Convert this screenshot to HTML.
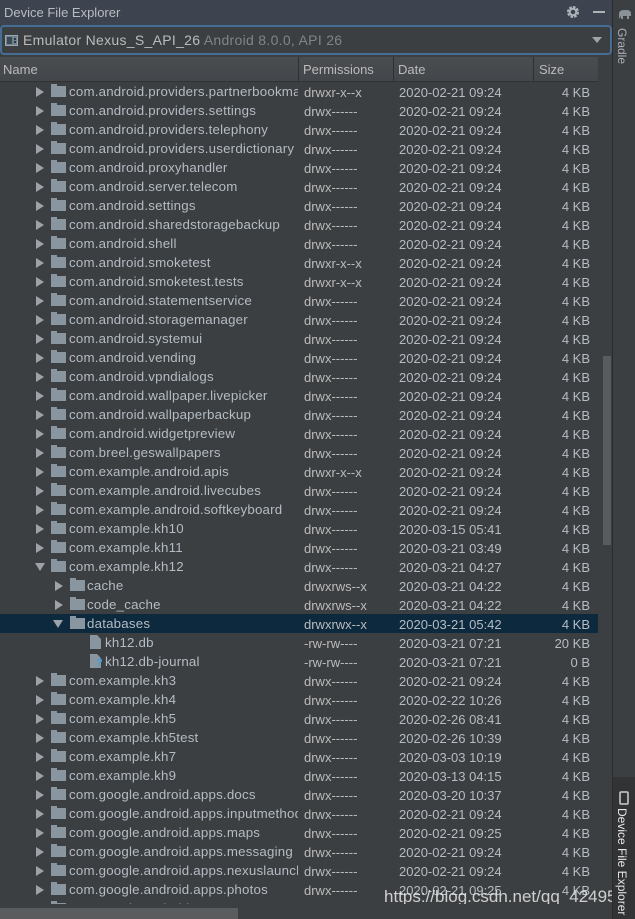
<!DOCTYPE html>
<html><head><meta charset="utf-8"><style>
*{margin:0;padding:0;box-sizing:border-box}
body{width:635px;height:919px;background:#3c3f41;font-family:"Liberation Sans",Arial,sans-serif;color:#bbbbbb;overflow:hidden;position:relative}
#title{position:absolute;left:0;top:0;width:613px;height:25px;background:#3d4450;font-size:13px;color:#b9bcc0}
#title span{position:absolute;left:4px;top:5px}
#combo{position:absolute;left:0;top:25px;width:612px;height:30px;background:#3c3f41;border:2px solid #466d94;border-radius:4px}
#combo .t{position:absolute;left:21px;top:5px;font-size:14px;color:#bbbbbb;letter-spacing:.3px}
#combo .t i{font-style:normal;color:#808488}
#hdr{position:absolute;left:0;top:57px;width:598px;height:25px;background:linear-gradient(#4a4d50,#43464a);border-bottom:1px solid #323232;font-size:13px;color:#bbbbbb}
#hdr div{position:absolute;top:5px}
.sep{position:absolute;top:0;width:1px;height:24px;background:#2e3032}
#list{position:absolute;left:0;top:82px;width:612px;height:822px;overflow:hidden}
.r{position:relative;height:19px;width:598px;font-size:13px;white-space:nowrap}
.r.sel{background:#0d293e}
.a{position:absolute;top:5px;width:0;height:0;border-left:8px solid #9da3a8;border-top:5px solid transparent;border-bottom:5px solid transparent}
.a.d{border-top:8px solid #9da3a8;border-left:5px solid transparent;border-right:5px solid transparent;border-bottom:0;top:6px}
.f{position:absolute;top:4px;width:15px;height:11px;background:#8a969f}
.f:before{content:"";position:absolute;left:0;top:-2px;width:6px;height:2px;background:#8a969f}
.fi{position:absolute;top:2px;width:11px;height:14px;background:#8a969f;clip-path:polygon(0 0,65% 0,100% 30%,100% 100%,0 100%)}
.n{position:absolute;top:2px;font-size:13.3px;letter-spacing:0.2px;color:#b4bcc4;width:229px;overflow:hidden}
.p{position:absolute;left:304px;top:3px}
.dt{position:absolute;left:399px;top:3px;color:#b5bcc3}
.s{position:absolute;right:8px;top:3px;color:#b5bcc3}
#vs{position:absolute;left:603px;top:356px;width:8px;height:189px;background:#595b5d}
#side{position:absolute;left:612px;top:0;width:23px;height:919px;background:#3c3f41;border-left:1px solid #2b2b2b}
#side .g{position:absolute;left:2px;top:28px;writing-mode:vertical-rl;font-size:12px;color:#a8adb2}
#side .de{position:absolute;left:0;top:777px;width:23px;height:142px;background:#313335}
#side .de span{position:absolute;left:2px;top:31px;writing-mode:vertical-rl;font-size:12px;color:#e6e6e6}
#hs{position:absolute;left:0;top:904px;width:612px;height:15px;background:#3c3f41}
#hs div{position:absolute;left:0;top:4px;width:238px;height:11px;background:#5a5c5e}
#wm{position:absolute;left:384px;top:887px;font-size:17px;color:#e8e8e8;white-space:nowrap;opacity:.85}
</style></head><body>
<div id="title"><span>Device File Explorer</span>
<svg style="position:absolute;left:566px;top:5px" width="14" height="14" viewBox="0 0 14 14"><circle cx="7" cy="7" r="4.5" fill="none" stroke="#aeb3b8" stroke-width="3" stroke-dasharray="2.4 1.1"/><circle cx="7" cy="7" r="3.3" fill="none" stroke="#aeb3b8" stroke-width="2"/></svg>
<div style="position:absolute;left:593px;top:11px;width:12px;height:2px;background:#aeb3b8"></div>
</div>
<div id="combo">
<svg style="position:absolute;left:3px;top:8px" width="13" height="11"><rect x="0.5" y="0.5" width="12" height="10" fill="#6f8390" stroke="#9aa7b0"/><rect x="2" y="2" width="5" height="7" fill="#3c4a55"/><rect x="9" y="3" width="2" height="2" fill="#2f3a43"/><rect x="9" y="6" width="2" height="2" fill="#2f3a43"/></svg>
<div class="t">Emulator Nexus_S_API_26 <i>Android 8.0.0, API 26</i></div>
<div style="position:absolute;left:590px;top:10px;width:0;height:0;border-top:6px solid #a0a4a8;border-left:5px solid transparent;border-right:5px solid transparent"></div>
</div>
<div id="hdr"><div style="left:3px">Name</div><span class="sep" style="left:298px"></span><div style="left:303px">Permissions</div><span class="sep" style="left:393px"></span><div style="left:398px">Date</div><span class="sep" style="left:533px"></span><div style="left:539px">Size</div></div>
<div id="list">
<div class="r"><span class="a" style="left:36px"></span><span class="f" style="left:51px"></span><span class="n" style="left:69px">com.android.providers.partnerbookmarks</span><span class="p">drwxr-x--x</span><span class="dt">2020-02-21 09:24</span><span class="s">4 KB</span></div>
<div class="r"><span class="a" style="left:36px"></span><span class="f" style="left:51px"></span><span class="n" style="left:69px">com.android.providers.settings</span><span class="p">drwx------</span><span class="dt">2020-02-21 09:24</span><span class="s">4 KB</span></div>
<div class="r"><span class="a" style="left:36px"></span><span class="f" style="left:51px"></span><span class="n" style="left:69px">com.android.providers.telephony</span><span class="p">drwx------</span><span class="dt">2020-02-21 09:24</span><span class="s">4 KB</span></div>
<div class="r"><span class="a" style="left:36px"></span><span class="f" style="left:51px"></span><span class="n" style="left:69px">com.android.providers.userdictionary</span><span class="p">drwx------</span><span class="dt">2020-02-21 09:24</span><span class="s">4 KB</span></div>
<div class="r"><span class="a" style="left:36px"></span><span class="f" style="left:51px"></span><span class="n" style="left:69px">com.android.proxyhandler</span><span class="p">drwx------</span><span class="dt">2020-02-21 09:24</span><span class="s">4 KB</span></div>
<div class="r"><span class="a" style="left:36px"></span><span class="f" style="left:51px"></span><span class="n" style="left:69px">com.android.server.telecom</span><span class="p">drwx------</span><span class="dt">2020-02-21 09:24</span><span class="s">4 KB</span></div>
<div class="r"><span class="a" style="left:36px"></span><span class="f" style="left:51px"></span><span class="n" style="left:69px">com.android.settings</span><span class="p">drwx------</span><span class="dt">2020-02-21 09:24</span><span class="s">4 KB</span></div>
<div class="r"><span class="a" style="left:36px"></span><span class="f" style="left:51px"></span><span class="n" style="left:69px">com.android.sharedstoragebackup</span><span class="p">drwx------</span><span class="dt">2020-02-21 09:24</span><span class="s">4 KB</span></div>
<div class="r"><span class="a" style="left:36px"></span><span class="f" style="left:51px"></span><span class="n" style="left:69px">com.android.shell</span><span class="p">drwx------</span><span class="dt">2020-02-21 09:24</span><span class="s">4 KB</span></div>
<div class="r"><span class="a" style="left:36px"></span><span class="f" style="left:51px"></span><span class="n" style="left:69px">com.android.smoketest</span><span class="p">drwxr-x--x</span><span class="dt">2020-02-21 09:24</span><span class="s">4 KB</span></div>
<div class="r"><span class="a" style="left:36px"></span><span class="f" style="left:51px"></span><span class="n" style="left:69px">com.android.smoketest.tests</span><span class="p">drwxr-x--x</span><span class="dt">2020-02-21 09:24</span><span class="s">4 KB</span></div>
<div class="r"><span class="a" style="left:36px"></span><span class="f" style="left:51px"></span><span class="n" style="left:69px">com.android.statementservice</span><span class="p">drwx------</span><span class="dt">2020-02-21 09:24</span><span class="s">4 KB</span></div>
<div class="r"><span class="a" style="left:36px"></span><span class="f" style="left:51px"></span><span class="n" style="left:69px">com.android.storagemanager</span><span class="p">drwx------</span><span class="dt">2020-02-21 09:24</span><span class="s">4 KB</span></div>
<div class="r"><span class="a" style="left:36px"></span><span class="f" style="left:51px"></span><span class="n" style="left:69px">com.android.systemui</span><span class="p">drwx------</span><span class="dt">2020-02-21 09:24</span><span class="s">4 KB</span></div>
<div class="r"><span class="a" style="left:36px"></span><span class="f" style="left:51px"></span><span class="n" style="left:69px">com.android.vending</span><span class="p">drwx------</span><span class="dt">2020-02-21 09:24</span><span class="s">4 KB</span></div>
<div class="r"><span class="a" style="left:36px"></span><span class="f" style="left:51px"></span><span class="n" style="left:69px">com.android.vpndialogs</span><span class="p">drwx------</span><span class="dt">2020-02-21 09:24</span><span class="s">4 KB</span></div>
<div class="r"><span class="a" style="left:36px"></span><span class="f" style="left:51px"></span><span class="n" style="left:69px">com.android.wallpaper.livepicker</span><span class="p">drwx------</span><span class="dt">2020-02-21 09:24</span><span class="s">4 KB</span></div>
<div class="r"><span class="a" style="left:36px"></span><span class="f" style="left:51px"></span><span class="n" style="left:69px">com.android.wallpaperbackup</span><span class="p">drwx------</span><span class="dt">2020-02-21 09:24</span><span class="s">4 KB</span></div>
<div class="r"><span class="a" style="left:36px"></span><span class="f" style="left:51px"></span><span class="n" style="left:69px">com.android.widgetpreview</span><span class="p">drwx------</span><span class="dt">2020-02-21 09:24</span><span class="s">4 KB</span></div>
<div class="r"><span class="a" style="left:36px"></span><span class="f" style="left:51px"></span><span class="n" style="left:69px">com.breel.geswallpapers</span><span class="p">drwx------</span><span class="dt">2020-02-21 09:24</span><span class="s">4 KB</span></div>
<div class="r"><span class="a" style="left:36px"></span><span class="f" style="left:51px"></span><span class="n" style="left:69px">com.example.android.apis</span><span class="p">drwxr-x--x</span><span class="dt">2020-02-21 09:24</span><span class="s">4 KB</span></div>
<div class="r"><span class="a" style="left:36px"></span><span class="f" style="left:51px"></span><span class="n" style="left:69px">com.example.android.livecubes</span><span class="p">drwx------</span><span class="dt">2020-02-21 09:24</span><span class="s">4 KB</span></div>
<div class="r"><span class="a" style="left:36px"></span><span class="f" style="left:51px"></span><span class="n" style="left:69px">com.example.android.softkeyboard</span><span class="p">drwx------</span><span class="dt">2020-02-21 09:24</span><span class="s">4 KB</span></div>
<div class="r"><span class="a" style="left:36px"></span><span class="f" style="left:51px"></span><span class="n" style="left:69px">com.example.kh10</span><span class="p">drwx------</span><span class="dt">2020-03-15 05:41</span><span class="s">4 KB</span></div>
<div class="r"><span class="a" style="left:36px"></span><span class="f" style="left:51px"></span><span class="n" style="left:69px">com.example.kh11</span><span class="p">drwx------</span><span class="dt">2020-03-21 03:49</span><span class="s">4 KB</span></div>
<div class="r"><span class="a d" style="left:35px"></span><span class="f" style="left:51px"></span><span class="n" style="left:69px">com.example.kh12</span><span class="p">drwx------</span><span class="dt">2020-03-21 04:27</span><span class="s">4 KB</span></div>
<div class="r"><span class="a" style="left:55px"></span><span class="f" style="left:70px"></span><span class="n" style="left:87px">cache</span><span class="p">drwxrws--x</span><span class="dt">2020-03-21 04:22</span><span class="s">4 KB</span></div>
<div class="r"><span class="a" style="left:55px"></span><span class="f" style="left:70px"></span><span class="n" style="left:87px">code_cache</span><span class="p">drwxrws--x</span><span class="dt">2020-03-21 04:22</span><span class="s">4 KB</span></div>
<div class="r sel"><span class="a d" style="left:53px"></span><span class="f" style="left:70px"></span><span class="n" style="left:87px">databases</span><span class="p">drwxrwx--x</span><span class="dt">2020-03-21 05:42</span><span class="s">4 KB</span></div>
<div class="r"><span class="fi" style="left:90px"></span><span class="n" style="left:105px">kh12.db</span><span class="p">-rw-rw----</span><span class="dt">2020-03-21 07:21</span><span class="s">20 KB</span></div>
<div class="r"><span class="fi" style="left:90px"></span><span style="position:absolute;left:96px;top:5px;font-size:11px;font-weight:bold;color:#3d9ed8">?</span><span class="n" style="left:105px">kh12.db-journal</span><span class="p">-rw-rw----</span><span class="dt">2020-03-21 07:21</span><span class="s">0 B</span></div>
<div class="r"><span class="a" style="left:36px"></span><span class="f" style="left:51px"></span><span class="n" style="left:69px">com.example.kh3</span><span class="p">drwx------</span><span class="dt">2020-02-21 09:24</span><span class="s">4 KB</span></div>
<div class="r"><span class="a" style="left:36px"></span><span class="f" style="left:51px"></span><span class="n" style="left:69px">com.example.kh4</span><span class="p">drwx------</span><span class="dt">2020-02-22 10:26</span><span class="s">4 KB</span></div>
<div class="r"><span class="a" style="left:36px"></span><span class="f" style="left:51px"></span><span class="n" style="left:69px">com.example.kh5</span><span class="p">drwx------</span><span class="dt">2020-02-26 08:41</span><span class="s">4 KB</span></div>
<div class="r"><span class="a" style="left:36px"></span><span class="f" style="left:51px"></span><span class="n" style="left:69px">com.example.kh5test</span><span class="p">drwx------</span><span class="dt">2020-02-26 10:39</span><span class="s">4 KB</span></div>
<div class="r"><span class="a" style="left:36px"></span><span class="f" style="left:51px"></span><span class="n" style="left:69px">com.example.kh7</span><span class="p">drwx------</span><span class="dt">2020-03-03 10:19</span><span class="s">4 KB</span></div>
<div class="r"><span class="a" style="left:36px"></span><span class="f" style="left:51px"></span><span class="n" style="left:69px">com.example.kh9</span><span class="p">drwx------</span><span class="dt">2020-03-13 04:15</span><span class="s">4 KB</span></div>
<div class="r"><span class="a" style="left:36px"></span><span class="f" style="left:51px"></span><span class="n" style="left:69px">com.google.android.apps.docs</span><span class="p">drwx------</span><span class="dt">2020-03-20 10:37</span><span class="s">4 KB</span></div>
<div class="r"><span class="a" style="left:36px"></span><span class="f" style="left:51px"></span><span class="n" style="left:69px">com.google.android.apps.inputmethod</span><span class="p">drwx------</span><span class="dt">2020-02-21 09:24</span><span class="s">4 KB</span></div>
<div class="r"><span class="a" style="left:36px"></span><span class="f" style="left:51px"></span><span class="n" style="left:69px">com.google.android.apps.maps</span><span class="p">drwx------</span><span class="dt">2020-02-21 09:25</span><span class="s">4 KB</span></div>
<div class="r"><span class="a" style="left:36px"></span><span class="f" style="left:51px"></span><span class="n" style="left:69px">com.google.android.apps.messaging</span><span class="p">drwx------</span><span class="dt">2020-02-21 09:24</span><span class="s">4 KB</span></div>
<div class="r"><span class="a" style="left:36px"></span><span class="f" style="left:51px"></span><span class="n" style="left:69px">com.google.android.apps.nexuslauncher</span><span class="p">drwx------</span><span class="dt">2020-02-21 09:24</span><span class="s">4 KB</span></div>
<div class="r"><span class="a" style="left:36px"></span><span class="f" style="left:51px"></span><span class="n" style="left:69px">com.google.android.apps.photos</span><span class="p">drwx------</span><span class="dt">2020-02-21 09:25</span><span class="s">4 KB</span></div>
<div class="r"><span class="a" style="left:36px"></span><span class="f" style="left:51px"></span><span class="n" style="left:69px">com.google.android.apps.restore</span><span class="p">drwx------</span><span class="dt">2020-02-21 09:24</span><span class="s">4 KB</span></div>
</div>
<div id="vs"></div>
<div id="wm">https://blog.csdn.net/qq_42495847</div>
<div id="hs"><div></div></div>
<div id="side">
<svg style="position:absolute;left:5px;top:8px" width="14" height="12" viewBox="0 0 14 12"><path d="M1 11 L1 6 Q1 2 6 2 L9 2 Q13 2 13 6 L13 8 L11 8 L11 11 L9 11 L9 8 L5 8 L5 11 L3 11 L3 8 Z" fill="#8a9198"/></svg>
<div class="g">Gradle</div>
<div class="de"><svg style="position:absolute;left:6px;top:14px" width="10" height="14"><rect x="1" y="1" width="8" height="12" rx="1" fill="none" stroke="#d0d0d0" stroke-width="1.5"/></svg><span>Device File Explorer</span></div>
</div>
</body></html>
